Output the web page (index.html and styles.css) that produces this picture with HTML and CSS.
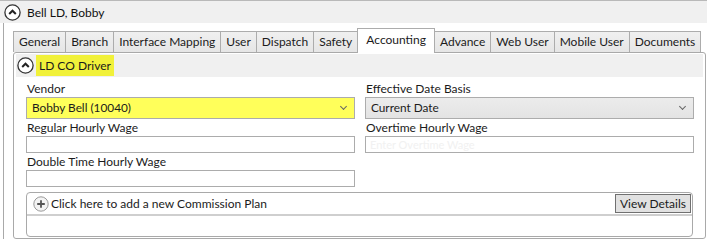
FILE: index.html
```html
<!DOCTYPE html>
<html lang="en">

<head>
    <meta charset="UTF-8">
    <meta name="viewport" content="width=device-width, initial-scale=1.0">
    <title>Driver - Accounting</title>
    <link rel="stylesheet" href="styles.css">
</head>

<body>
    <div class="topbar">
        <span class="toggle">
            <svg width="17" height="17" viewBox="0 0 17 17">
                <circle cx="8.5" cy="8.5" r="7.6" fill="#fff" stroke="#333" stroke-width="1.3" />
                <path d="M5.2 10 L8.5 6.7 L11.8 10" fill="none" stroke="#222" stroke-width="2" />
            </svg>
        </span>
        <span class="title">Bell LD, Bobby</span>
    </div>

    <div class="main">
        <div class="tabs">
            <div class="tab">General</div>
            <div class="tab">Branch</div>
            <div class="tab">Interface Mapping</div>
            <div class="tab">User</div>
            <div class="tab">Dispatch</div>
            <div class="tab">Safety</div>
            <div class="tab active">Accounting</div>
            <div class="tab">Advance</div>
            <div class="tab">Web User</div>
            <div class="tab">Mobile User</div>
            <div class="tab">Documents</div>
        </div>

        <div class="expander">
            <div class="exp-header">
                <span class="toggle small">
                    <svg width="17" height="17" viewBox="0 0 17 17">
                        <circle cx="8.5" cy="8.5" r="7.6" fill="#fff" stroke="#333" stroke-width="1.3" />
                        <path d="M5.2 10 L8.5 6.7 L11.8 10" fill="none" stroke="#222" stroke-width="2" />
                    </svg>
                </span>
                <span class="hl">LD CO Driver</span>
            </div>

            <div class="form">
                <div class="field">
                    <label>Vendor</label>
                    <div class="combo yellow">Bobby Bell (10040)<span class="arrow"></span></div>
                </div>
                <div class="field">
                    <label>Effective Date Basis</label>
                    <div class="combo grey">Current Date<span class="arrow"></span></div>
                </div>

                <div class="field">
                    <label>Regular Hourly Wage</label>
                    <div class="textbox"></div>
                </div>
                <div class="field">
                    <label>Overtime Hourly Wage</label>
                    <div class="textbox faint">Enter Overtime Wage</div>
                </div>

                <div class="field">
                    <label>Double Time Hourly Wage</label>
                    <div class="textbox"></div>
                </div>
            </div>

            <div class="commission">
                <div class="comm-row">
                    <span class="plus">
                        <svg width="16" height="16" viewBox="0 0 16 16">
                            <circle cx="8" cy="8" r="7.2" fill="#f4f4f4" stroke="#9a9a9a" stroke-width="1" />
                            <path d="M8 4.2 V11.8 M4.2 8 H11.8" stroke="#555" stroke-width="1.8" />
                        </svg>
                    </span>
                    <span class="comm-text">Click here to add a new Commission Plan</span>
                    <button class="details">View Details</button>
                </div>
            </div>
        </div>
    </div>
</body>

</html>
```

FILE: styles.css
```css
body {
    margin: 0;
    width: 707px;
    height: 239px;
    overflow: hidden;
    background: #fff;
    font-family: "Segoe UI", Lato, sans-serif;
    font-size: 12px;
    color: #1b1b1b;
}

.topbar {
    height: 22px;
    background: #f0f0f0;
    border-top: 1px solid #b9b9b9;
    display: flex;
    align-items: center;
    padding-left: 4px;
}

.toggle {
    width: 17px;
    height: 17px;
    display: flex;
}

.title {
    font-size: 12px;
    margin-left: 6px;
    color: #111;
}

.main {
    margin-left: 3px;
    border-left: 1px solid #a9a9a9;
    padding: 7px 1px 2px 9px;
    height: 208px;
}

/* tab strip */
.tabs {
    display: flex;
    align-items: flex-end;
    height: 22px;
    padding-left: 1px;
}

.tab {
    height: 20px;
    line-height: 19px;
    padding: 0 5px;
    border: 1px solid #acacac;
    border-bottom: none;
    margin-left: -1px;
    background: linear-gradient(#f0f0f0, #e6e6e6);
    font-size: 12px;
    white-space: nowrap;
}

.tab.active {
    height: 24px;
    line-height: 22px;
    padding: 0 8px;
    background: #fff;
    position: relative;
    z-index: 1;
    margin-bottom: -1px;
}

/* expander group */
.expander {
    border: 1px solid #a9a9a9;
    border-radius: 3px;
    height: 183px;
    padding: 1px 2px;
}

.exp-header {
    height: 23px;
    background: #f0f0f0;
    display: flex;
    align-items: center;
    padding-left: 1px;
}

.hl {
    background: #f1f13a;
    font-size: 12px;
    padding: 0 3px;
    margin-left: 2px;
    line-height: 21px;
}

.form {
    display: grid;
    grid-template-columns: 329px 329px;
    column-gap: 10px;
    padding: 3px 0 0 10px;
}

.field label {
    display: block;
    height: 17px;
    line-height: 17px;
    padding-left: 1px;
}

.combo {
    height: 20px;
    line-height: 20px;
    border: 1px solid #acacac;
    padding-left: 5px;
    position: relative;
    font-size: 11.8px;
}

.combo.yellow {
    background: #ffff5a;
}

.combo.grey {
    background: linear-gradient(#ececec, #e3e3e3);
}

.arrow {
    position: absolute;
    right: 8px;
    top: 6px;
    width: 4px;
    height: 4px;
    border-right: 1px solid #666;
    border-bottom: 1px solid #666;
    transform: rotate(45deg);
}

.textbox {
    height: 15px;
    border: 1px solid #acacac;
    background: #fff;
}

.textbox.faint {
    color: #f1f1f1;
    font-size: 11px;
    line-height: 15px;
    padding-left: 4px;
}

/* commission plans */
.commission {
    margin: 5px 10px 0 10px;
    border: 1px solid #a9a9a9;
    border-radius: 4px;
    height: 43px;
}

.comm-row {
    height: 19px;
    border-bottom: 2px solid #cfcfcf;
    border-radius: 0 4px 0 0;
    display: flex;
    align-items: center;
    padding: 1px 1px 1px 6px;
}

.plus {
    display: flex;
    width: 16px;
    height: 16px;
}

.comm-text {
    margin-left: 2px;
    font-size: 12px;
    flex: 1;
}

.details {
    font-family: inherit;
    font-size: 12px;
    color: #1b1b1b;
    height: 19px;
    padding: 0 4px;
    background: #e1e1e1;
    border: 1px solid #707070;
    border-radius: 0;
}
```
